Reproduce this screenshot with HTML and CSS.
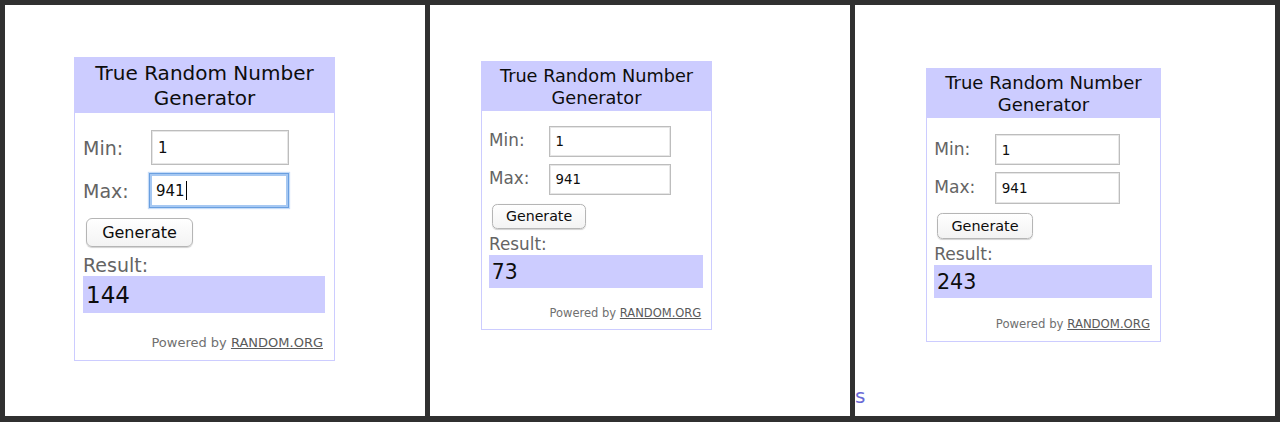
FILE: index.html
```html
<!DOCTYPE html>
<html lang="en">
<head>
<meta charset="utf-8">
<title>True Random Number Generator</title>
<link rel="stylesheet" href="styles.css">
</head>
<body>
<main class="strip">
  <section class="panel panel--one">
    <div class="widget">
      <div class="widget__head">True Random Number<br>Generator</div>
      <div class="widget__body">
        <div class="fields">
          <label class="fields__label">Min:</label>
          <div class="field">1</div>
          <label class="fields__label">Max:</label>
          <div class="field field--focus">941<span class="caret"></span></div>
        </div>
        <button class="btn" type="button">Generate</button>
        <div class="result__label">Result:</div>
        <div class="result__value">144</div>
        <div class="powered">Powered by <a class="powered__link">RANDOM.ORG</a></div>
      </div>
    </div>
  </section>
  <section class="panel panel--two">
    <div class="widget widget--small">
      <div class="widget__head">True Random Number<br>Generator</div>
      <div class="widget__body">
        <div class="fields">
          <label class="fields__label">Min:</label>
          <div class="field">1</div>
          <label class="fields__label">Max:</label>
          <div class="field">941</div>
        </div>
        <button class="btn" type="button">Generate</button>
        <div class="result__label">Result:</div>
        <div class="result__value">73</div>
        <div class="powered">Powered by <a class="powered__link">RANDOM.ORG</a></div>
      </div>
    </div>
  </section>
  <section class="panel panel--three">
    <div class="widget widget--mid">
      <div class="widget__head">True Random Number<br>Generator</div>
      <div class="widget__body">
        <div class="fields">
          <label class="fields__label">Min:</label>
          <div class="field">1</div>
          <label class="fields__label">Max:</label>
          <div class="field">941</div>
        </div>
        <button class="btn" type="button">Generate</button>
        <div class="result__label">Result:</div>
        <div class="result__value">243</div>
        <div class="powered">Powered by <a class="powered__link">RANDOM.ORG</a></div>
      </div>
    </div>
    <div class="panel__tail">s</div>
  </section>
</main>
</body>
</html>
```

FILE: styles.css
```css
html, body {
  margin: 0;
  padding: 0;
}

body {
  background: #303030;
  font-family: "DejaVu Sans", Verdana, sans-serif;
  width: 1280px;
  height: 422px;
  overflow: hidden;
}

.strip {
  display: flex;
  gap: 5px;
  padding: 5px 5px 6px;
}

.panel {
  width: 420px;
  height: 411px;
  background: #fff;
  box-sizing: border-box;
  overflow: hidden;
  display: flex;
  flex-direction: column;
  align-items: flex-start;
}

.panel--one { padding: 52px 0 0 69px; }
.panel--two { padding: 56px 0 0 51px; }
.panel--three { padding: 63px 0 0 71px; }

.panel__tail {
  margin-top: auto;
  margin-left: -71px;
  padding-bottom: 10px;
  font-size: 20px;
  line-height: 20px;
  color: #6a6ad6;
}

.widget {
  width: 261px;
  box-sizing: border-box;
  border: 1px solid #ccccff;
  background: #fff;
}

.widget--small { zoom: 0.885; }
.widget--mid { zoom: 0.9; }

.widget__head {
  background: #ccccff;
  text-align: center;
  font-size: 20px;
  line-height: 25px;
  color: #0d0d0d;
  padding: 3px 0 2px;
}

.widget__body {
  padding: 17px 9px 10px 8px;
  display: flex;
  flex-direction: column;
  align-items: flex-start;
}

.fields {
  display: grid;
  grid-template-columns: 68px 138px;
  row-gap: 8px;
  align-items: center;
}

.fields__label {
  font-size: 19px;
  line-height: 22px;
  color: #646464;
}

.field {
  height: 35px;
  box-sizing: border-box;
  border: 1px solid #bdbdbd;
  box-shadow: inset 0 0 0 1px #e6e6e6;
  padding: 0 6px;
  display: flex;
  align-items: center;
  font-size: 15px;
  color: #0d0d0d;
  background: #fff;
}

.field--focus {
  margin-left: -2px;
  border: 1px solid #6a9fe0;
  box-shadow: inset 0 0 0 2px #a6c8f2, 0 0 1px 1px #c6dcf7;
}

.caret {
  display: inline-block;
  width: 1px;
  height: 19px;
  background: #000;
  margin-left: 1px;
}

.btn {
  margin: 10px 0 0 3px;
  width: 107px;
  height: 29px;
  box-sizing: border-box;
  border: 1px solid #b5b5b5;
  border-radius: 6px;
  background: linear-gradient(#ffffff, #f3f3f3);
  box-shadow: 0 1px 1px rgba(0, 0, 0, 0.18);
  font-family: "DejaVu Sans", Verdana, sans-serif;
  font-size: 16px;
  color: #0d0d0d;
  padding: 0;
}

.result__label {
  margin-top: 7px;
  font-size: 19px;
  line-height: 22px;
  color: #646464;
}

.result__value {
  align-self: stretch;
  height: 37px;
  box-sizing: border-box;
  background: #ccccff;
  font-size: 23px;
  line-height: 35px;
  padding: 2px 0 0 3px;
  color: #0d0d0d;
}

.powered {
  align-self: stretch;
  text-align: right;
  margin-top: 22px;
  padding-right: 2px;
  font-size: 13px;
  line-height: 15px;
  color: #707070;
}

.powered__link {
  color: #5a5a5a;
  text-decoration: underline;
}
```
